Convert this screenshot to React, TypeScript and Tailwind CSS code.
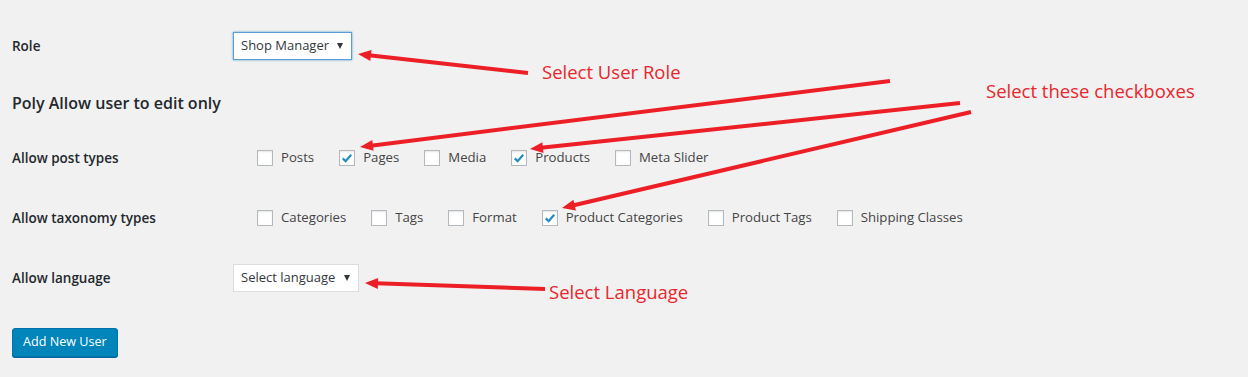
import React from "react"

const RED = "#ec1f27"

type Arrow = { x1: number; y1: number; x2: number; y2: number }

const arrows: Arrow[] = [
  { x1: 528, y1: 73, x2: 358, y2: 54 },
  { x1: 890, y1: 81, x2: 360, y2: 147 },
  { x1: 960, y1: 103, x2: 530, y2: 149 },
  { x1: 971, y1: 112, x2: 562, y2: 208 },
  { x1: 545, y1: 289, x2: 365, y2: 283 },
]

function ArrowLine({ x1, y1, x2, y2 }: Arrow) {
  const dx = x2 - x1
  const dy = y2 - y1
  const len = Math.sqrt(dx * dx + dy * dy)
  const ux = dx / len
  const uy = dy / len
  const headLen = 13
  const headW = 5.5
  const bx = x2 - ux * headLen
  const by = y2 - uy * headLen
  const px = -uy
  const py = ux
  const pts = `${x2},${y2} ${bx + px * headW},${by + py * headW} ${bx - px * headW},${by - py * headW}`
  return (
    <g>
      <line x1={x1} y1={y1} x2={bx + ux * 2} y2={by + uy * 2} stroke={RED} strokeWidth={4} />
      <polygon points={pts} fill={RED} />
    </g>
  )
}

function Checkbox({ label, checked }: { label: string; checked?: boolean }) {
  return (
    <label className="flex items-center mr-[25px] text-[13.2px] text-[#444]">
      <span className="w-4 h-4 bg-white border border-[#b4b9be] shadow-[inset_0_1px_2px_rgba(0,0,0,0.1)] flex items-center justify-center">
        {checked && (
          <svg width="14" height="14" viewBox="0 0 14 14">
            <path d="M2.8 7.4 L5.6 10.2 L11.2 3.8" fill="none" stroke="#1e8cbe" strokeWidth="2.2" />
          </svg>
        )}
      </span>
      <span className="ml-2">{label}</span>
    </label>
  )
}

function Select({ value, focused, width }: { value: string; focused?: boolean; width: string }) {
  return (
    <div
      className={`${width} h-[28px] bg-white flex items-center justify-between pl-[7px] pr-[8px] text-[13px] text-[#32373c] ${
        focused ? "border border-[#5b9dd9] shadow-[0_0_2px_rgba(30,140,190,0.8)]" : "border border-[#ddd]"
      }`}
    >
      <span>{value}</span>
      <svg width="6" height="6" viewBox="0 0 7 7">
        <path d="M0 0 L7 0 L3.5 7 z" fill="#32373c" />
      </svg>
    </div>
  )
}

export default function App() {
  return (
    <div className="relative w-[1248px] h-[377px] bg-[#f1f1f1] font-['Open_Sans',sans-serif] text-[#23282d] pl-3 pt-[32px] overflow-hidden">
      {/* Role */}
      <div className="flex items-center h-[28px]">
        <div className="w-[221px] text-[13.5px] font-semibold">Role</div>
        <Select value="Shop Manager" focused width="w-[119px]" />
      </div>

      {/* Heading */}
      <h2 className="mt-[31px] h-6 leading-6 text-[16px] font-semibold">Poly Allow user to edit only</h2>

      {/* Post types */}
      <div className="flex items-center h-4 mt-[35px]">
        <div className="w-[245px] text-[13.5px] font-semibold">Allow post types</div>
        <Checkbox label="Posts" />
        <Checkbox label="Pages" checked />
        <Checkbox label="Media" />
        <Checkbox label="Products" checked />
        <Checkbox label="Meta Slider" />
      </div>

      {/* Taxonomies */}
      <div className="flex items-center h-4 mt-[44px]">
        <div className="w-[245px] text-[13.5px] font-semibold">Allow taxonomy types</div>
        <Checkbox label="Categories" />
        <Checkbox label="Tags" />
        <Checkbox label="Format" />
        <Checkbox label="Product Categories" checked />
        <Checkbox label="Product Tags" />
        <Checkbox label="Shipping Classes" />
      </div>

      {/* Language */}
      <div className="flex items-center h-[28px] mt-[38px]">
        <div className="w-[221px] text-[13.5px] font-semibold">Allow language</div>
        <Select value="Select language" width="w-[126px]" />
      </div>

      <button className="mt-[36px] h-[29px] px-[10px] bg-[#0085ba] border border-[#0073aa] rounded-[3px] text-white text-[12.6px] shadow-[0_1px_0_#006799]">
        Add New User
      </button>

      {/* Annotations */}
      <svg className="absolute inset-0 pointer-events-none" width="1248" height="377">
        {arrows.map((a, i) => (
          <ArrowLine key={i} {...a} />
        ))}
      </svg>
      <span className="absolute left-[542px] top-[60px] text-[18.5px] leading-6 text-[#e8262d]">Select User Role</span>
      <span className="absolute left-[986px] top-[79px] text-[18.5px] leading-6 text-[#e8262d]">Select these checkboxes</span>
      <span className="absolute left-[549px] top-[280px] text-[18.5px] leading-6 text-[#e8262d]">Select Language</span>
    </div>
  )
}
